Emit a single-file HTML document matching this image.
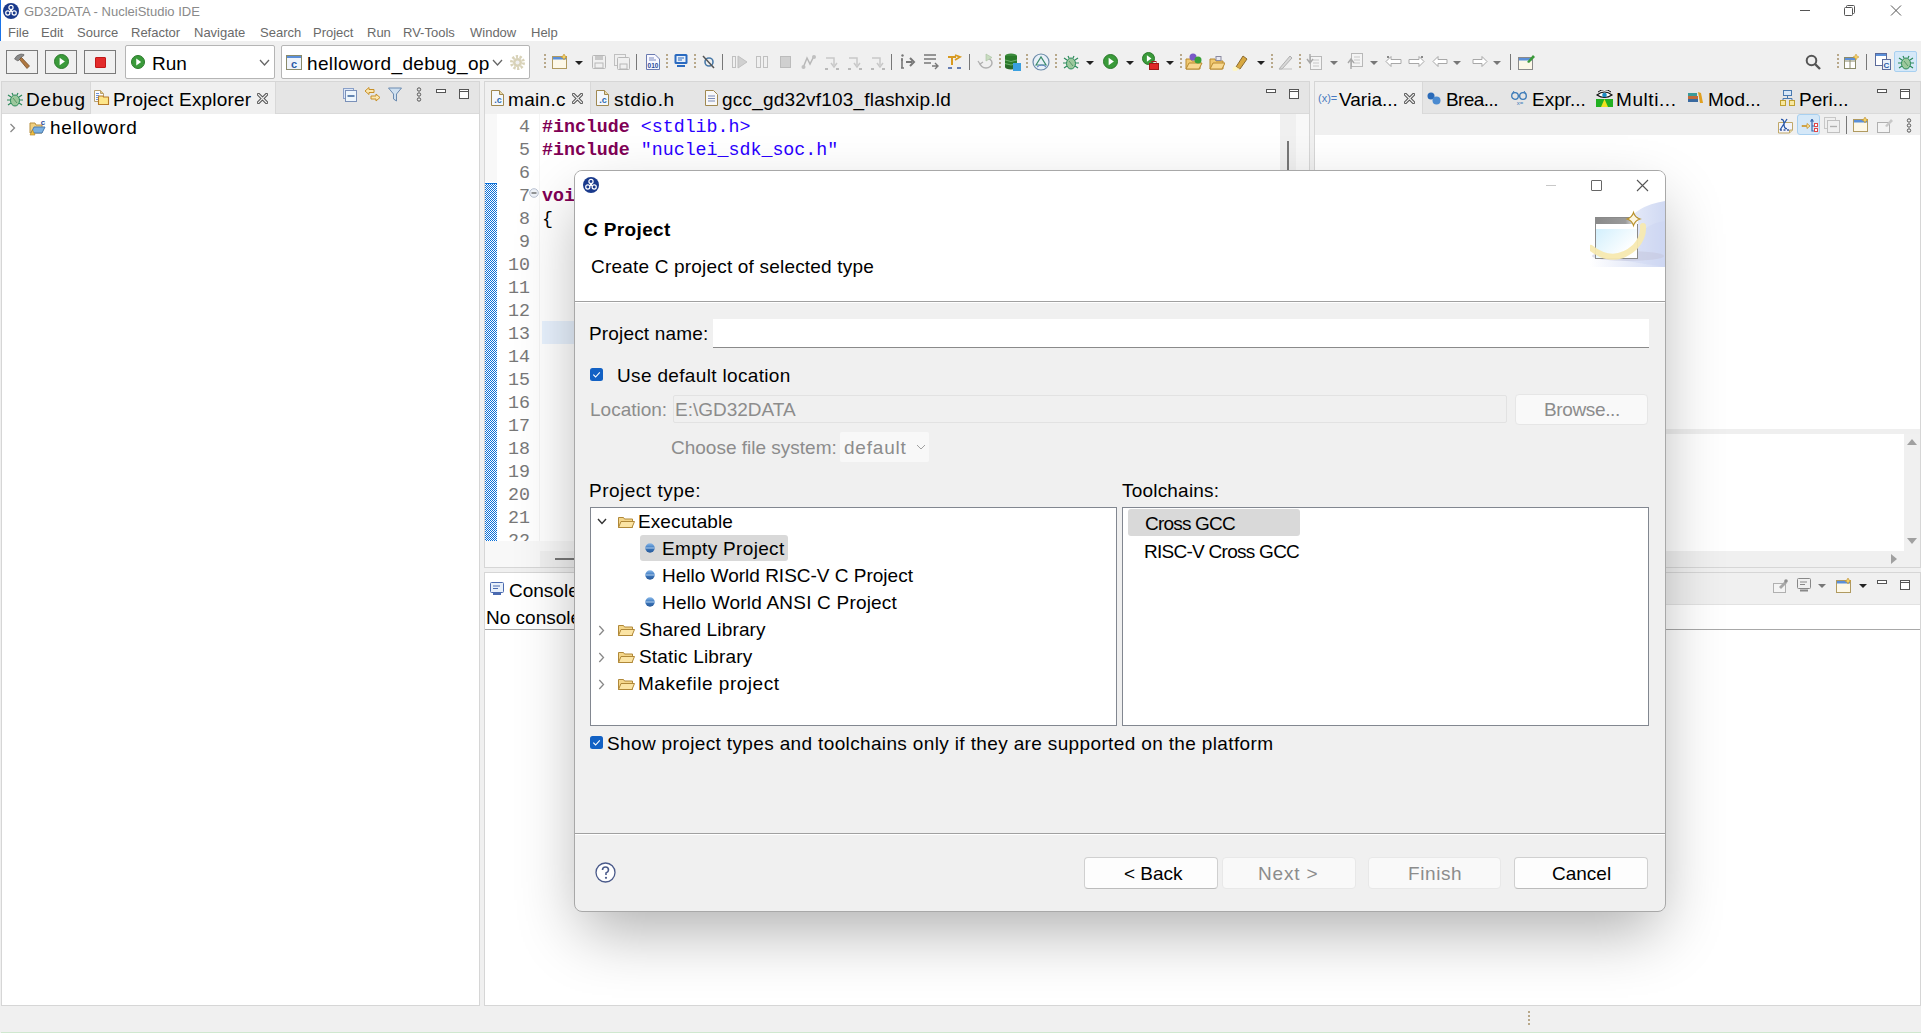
<!DOCTYPE html>
<html><head><meta charset="utf-8"><title>NucleiStudio IDE</title>
<style>
html,body{margin:0;padding:0;}
body{width:1921px;height:1033px;position:relative;overflow:hidden;background:#f0f0f0;font-family:'Liberation Sans',sans-serif;}
body>div,body>svg{position:absolute;}
.t{white-space:pre;line-height:0;}
.kw{color:#7f0055;font-weight:700;}
.st{color:#2a00ff;}
</style></head><body>
<div style="left:0px;top:0px;width:1921px;height:41px;background:#fff"></div>
<div style="left:0px;top:0px;width:1px;height:41px;background:#1a73e8"></div>
<svg style="left:3px;top:3px;" width="16" height="16" viewBox="0 0 16 16"><circle cx="8.0" cy="8.0" r="8.0" fill="#1a3a8c"/><g fill="none" stroke="#fff" stroke-width="1.2"><circle cx="8.0" cy="4.4" r="2.08"/><circle cx="4.8" cy="10.0" r="2.08"/><circle cx="11.2" cy="10.0" r="2.08"/></g><circle cx="8.0" cy="8.0" r="1.2" fill="#fff"/></svg>
<div class="t" style="left:24px;top:12px;font-size:13px;color:#8a8a8a;font-weight:400;font-family:'Liberation Sans';">GD32DATA - NucleiStudio IDE</div>
<div style="left:1800px;top:10px;width:10px;height:1px;background:#555"></div>
<svg style="left:1844px;top:5px;" width="12" height="11" viewBox="0 0 12 11"><rect x="0.5" y="2.5" width="8" height="8" rx="1" fill="none" stroke="#555"/><path d="M2.5 2.5V1.5Q2.5 0.5 3.5 0.5H9.5Q10.5 0.5 10.5 1.5V7.5Q10.5 8.5 9.5 8.5H8.5" fill="none" stroke="#555"/></svg>
<svg style="left:1890px;top:5px;" width="12" height="11" viewBox="0 0 12 11"><path d="M1 0.5L11 10.5M11 0.5L1 10.5" stroke="#555" stroke-width="1"/></svg>
<div class="t" style="left:8px;top:33px;font-size:13px;color:#6a6a6a;font-weight:400;font-family:'Liberation Sans';">File</div>
<div class="t" style="left:41px;top:33px;font-size:13px;color:#6a6a6a;font-weight:400;font-family:'Liberation Sans';">Edit</div>
<div class="t" style="left:77px;top:33px;font-size:13px;color:#6a6a6a;font-weight:400;font-family:'Liberation Sans';">Source</div>
<div class="t" style="left:131px;top:33px;font-size:13px;color:#6a6a6a;font-weight:400;font-family:'Liberation Sans';">Refactor</div>
<div class="t" style="left:194px;top:33px;font-size:13px;color:#6a6a6a;font-weight:400;font-family:'Liberation Sans';">Navigate</div>
<div class="t" style="left:260px;top:33px;font-size:13px;color:#6a6a6a;font-weight:400;font-family:'Liberation Sans';">Search</div>
<div class="t" style="left:313px;top:33px;font-size:13px;color:#6a6a6a;font-weight:400;font-family:'Liberation Sans';">Project</div>
<div class="t" style="left:367px;top:33px;font-size:13px;color:#6a6a6a;font-weight:400;font-family:'Liberation Sans';">Run</div>
<div class="t" style="left:403px;top:33px;font-size:13px;color:#6a6a6a;font-weight:400;font-family:'Liberation Sans';">RV-Tools</div>
<div class="t" style="left:470px;top:33px;font-size:13px;color:#6a6a6a;font-weight:400;font-family:'Liberation Sans';">Window</div>
<div class="t" style="left:531px;top:33px;font-size:13px;color:#6a6a6a;font-weight:400;font-family:'Liberation Sans';">Help</div>
<div style="left:6px;top:50px;width:32px;height:24px;border:1px solid #7a7a7a;box-sizing:border-box"></div>
<div style="left:45px;top:50px;width:32px;height:24px;border:1px solid #7a7a7a;box-sizing:border-box"></div>
<div style="left:84px;top:50px;width:32px;height:24px;border:1px solid #7a7a7a;box-sizing:border-box"></div>
<svg style="left:13px;top:53px;" width="18" height="18" viewBox="0 0 18 18"><path d="M1.5 6 Q3 2 8 1 L11 1.5 L10.5 3 Q8 3.5 7.5 5.5 L5 8 Q3 7 1.5 6 Z" fill="#8a8a8a" stroke="#555" stroke-width="0.6"/><path d="M6.5 6.5 L8.5 4.5 L16.5 13 L14 15.5 Z" fill="#b07840" stroke="#6a4420" stroke-width="0.7"/></svg>
<svg style="left:54px;top:54px;" width="15" height="15" viewBox="0 0 15 15"><circle cx="7.5" cy="7.5" r="7.0" fill="#3a9a3a" stroke="#2a7a2a" stroke-width="1"/><path d="M5.625 3.75 L10.875 7.5 L5.625 11.25 Z" fill="#fff"/></svg>
<div style="left:95px;top:57px;width:11px;height:11px;background:#e32b2b;border-radius:1px;border:1px solid #c01818;box-sizing:border-box"></div>
<div style="left:125px;top:45px;width:150px;height:34px;background:#fff;border:1px solid #b5b5b5;border-radius:2px;box-sizing:border-box"></div>
<svg style="left:131px;top:55px;" width="14" height="14" viewBox="0 0 14 14"><circle cx="7.0" cy="7.0" r="6.5" fill="#3a9a3a" stroke="#2a7a2a" stroke-width="1"/><path d="M5.25 3.5 L10.15 7.0 L5.25 10.5 Z" fill="#fff"/></svg>
<div class="t" style="left:152px;top:64px;font-size:19px;color:#000;font-weight:400;font-family:'Liberation Sans';">Run</div>
<svg style="left:259px;top:59px;" width="11" height="7" viewBox="0 0 11 7"><path d="M1 1 L5.5 6 L10 1" fill="none" stroke="#666" stroke-width="1.3"/></svg>
<div style="left:281px;top:45px;width:249px;height:34px;background:#fff;border:1px solid #b5b5b5;border-radius:2px;box-sizing:border-box"></div>
<svg style="left:286px;top:55px;" width="16" height="15" viewBox="0 0 16 15"><rect x="0.5" y="0.5" width="15" height="14" fill="#eef3fb" stroke="#8a8a6a"/><rect x="1" y="1" width="14" height="2" fill="#5b8fd8"/><text x="8" y="12.5" font-size="11" font-family="Liberation Sans" font-weight="700" fill="#2a5aa8" text-anchor="middle">c</text></svg>
<div class="t" style="left:307px;top:64px;font-size:19px;color:#000;font-weight:400;font-family:'Liberation Sans';letter-spacing:0.35px;">helloword_debug_op</div>
<svg style="left:492px;top:59px;" width="11" height="7" viewBox="0 0 11 7"><path d="M1 1 L5.5 6 L10 1" fill="none" stroke="#666" stroke-width="1.3"/></svg>
<svg style="left:509px;top:54px;" width="17" height="17" viewBox="0 0 17 17"><circle cx="8.5" cy="8.5" r="6" fill="none" stroke="#d8d2b8" stroke-width="3" stroke-dasharray="2.2 1.5"/><circle cx="8.5" cy="8.5" r="4.5" fill="#d8d2b8"/><circle cx="8.5" cy="8.5" r="2" fill="#f0f0f0"/></svg>
<div style="left:544px;top:54px;width:2px;height:16px;background:repeating-linear-gradient(#b8a88a 0 2px, transparent 2px 4px)"></div>
<svg style="left:552px;top:54px;" width="16" height="16" viewBox="0 0 16 16"><rect x="0.5" y="2.5" width="14" height="12" fill="#fdf8e8" stroke="#b09a60"/><rect x="1" y="3" width="13" height="2.5" fill="#5b8fd8"/><path d="M12 0 L13 2 L15 3 L13 4 L12 6 L11 4 L9 3 L11 2 Z" fill="#f5d060" stroke="#c09030" stroke-width="0.6"/></svg>
<svg style="left:575px;top:61px;" width="8" height="4" viewBox="0 0 8 4"><path d="M0 0 L8 0 L4 4 Z" fill="#222"/></svg>
<svg style="left:591px;top:54px;" width="16" height="16" viewBox="0 0 16 16"><rect x="1.5" y="1.5" width="13" height="13" rx="1" fill="none" stroke="#b8b8b8"/><rect x="4" y="2" width="8" height="4" fill="#c8c8c8"/><rect x="4" y="9" width="8" height="5" fill="none" stroke="#b8b8b8"/></svg>
<svg style="left:614px;top:54px;" width="16" height="16" viewBox="0 0 16 16"><rect x="0.5" y="0.5" width="11" height="11" fill="none" stroke="#c0c0c0"/><rect x="3.5" y="3.5" width="12" height="12" rx="1" fill="#f0f0f0" stroke="#b8b8b8"/><rect x="6" y="10" width="7" height="5" fill="none" stroke="#b8b8b8"/></svg>
<div style="left:636px;top:54px;width:1px;height:16px;background:#777"></div>
<svg style="left:645px;top:53px;" width="16" height="18" viewBox="0 0 16 18"><path d="M1.5 1.5 H10 L14.5 6 V16.5 H1.5 Z" fill="#f8f8ff" stroke="#6a7ab0"/><path d="M4 5 H9 M4 7 H11" stroke="#7a8ac0"/><text x="8" y="15" font-size="6.5" font-family="Liberation Sans" font-weight="700" fill="#2a4a98" text-anchor="middle">010</text></svg>
<div style="left:666px;top:54px;width:2px;height:16px;background:repeating-linear-gradient(#b8a88a 0 2px, transparent 2px 4px)"></div>
<svg style="left:674px;top:53px;" width="14" height="16" viewBox="0 0 14 16"><rect x="0.5" y="1" width="13" height="10" rx="1.5" fill="#2a6ac0"/><rect x="2.5" y="3" width="9" height="6" fill="#e8f0fa"/><path d="M4 5 H10 M4 7 H8" stroke="#2a6ac0"/><rect x="3" y="12" width="8" height="2" fill="#2a6ac0"/></svg>
<div style="left:694px;top:54px;width:2px;height:16px;background:repeating-linear-gradient(#b8a88a 0 2px, transparent 2px 4px)"></div>
<svg style="left:702px;top:54px;" width="13" height="16" viewBox="0 0 13 16"><circle cx="7" cy="8" r="4" fill="none" stroke="#4a7aa8" stroke-width="1.6"/><path d="M1 2 L12 14" stroke="#555" stroke-width="1.5"/></svg>
<div style="left:722px;top:54px;width:1px;height:16px;background:#777"></div>
<svg style="left:731px;top:55px;" width="17" height="14" viewBox="0 0 17 14"><rect x="1.5" y="1.5" width="3" height="11" fill="none" stroke="#c0c0c0"/><path d="M7 1 L16 7 L7 13 Z" fill="#d0d0d0" stroke="#c0c0c0"/></svg>
<svg style="left:756px;top:55px;" width="12" height="14" viewBox="0 0 12 14"><rect x="0.5" y="1.5" width="4" height="11" fill="none" stroke="#c0c0c0"/><rect x="7.5" y="1.5" width="4" height="11" fill="none" stroke="#c0c0c0"/></svg>
<svg style="left:779px;top:55px;" width="13" height="14" viewBox="0 0 13 14"><rect x="1.5" y="1.5" width="10" height="11" fill="#d0d0d0" stroke="#bcbcbc"/></svg>
<svg style="left:801px;top:54px;" width="15" height="16" viewBox="0 0 15 16"><path d="M2 14 L6 4 L9 10 L13 2" fill="none" stroke="#b8b8b8" stroke-width="1.5"/><circle cx="2.5" cy="13" r="2" fill="#c0c0c0"/><circle cx="13" cy="3" r="2" fill="#c0c0c0"/></svg>
<svg style="left:824px;top:54px;" width="16" height="16" viewBox="0 0 16 16"><path d="M2 4 H10 V11" fill="none" stroke="#c8c8c8" stroke-width="1.5"/><path d="M7 9 L10 13 L13 9" fill="none" stroke="#c8c8c8" stroke-width="1.5"/><path d="M1 15 H4 M12 15 H15" stroke="#a8a8a8" stroke-width="1.5"/></svg>
<svg style="left:847px;top:54px;" width="16" height="16" viewBox="0 0 16 16"><path d="M2 4 H10 V11" fill="none" stroke="#c8c8c8" stroke-width="1.5"/><path d="M7 9 L10 13 L13 9" fill="none" stroke="#c8c8c8" stroke-width="1.5"/><path d="M1 15 H4 M12 15 H15" stroke="#a8a8a8" stroke-width="1.5"/></svg>
<svg style="left:870px;top:54px;" width="16" height="16" viewBox="0 0 16 16"><path d="M2 4 H10 V11" fill="none" stroke="#c8c8c8" stroke-width="1.5"/><path d="M7 9 L10 13 L13 9" fill="none" stroke="#c8c8c8" stroke-width="1.5"/><path d="M1 15 H4 M12 15 H15" stroke="#a8a8a8" stroke-width="1.5"/></svg>
<div style="left:891px;top:54px;width:1px;height:16px;background:#777"></div>
<svg style="left:900px;top:54px;" width="16" height="16" viewBox="0 0 16 16"><path d="M2 4 V14 M1 14 H4 M1 6 H3" stroke="#777" stroke-width="1.6"/><circle cx="2.5" cy="1.5" r="1.2" fill="#777"/><path d="M6 8 H12 M10 4 L14 8 L10 12" fill="none" stroke="#777" stroke-width="2"/></svg>
<svg style="left:923px;top:53px;" width="16" height="17" viewBox="0 0 16 17"><path d="M1 2 H13 M1 6 H13 M1 10 H8" stroke="#777" stroke-width="1.6"/><path d="M9 13 H14 M12 10 L15 13 L12 16" fill="none" stroke="#777" stroke-width="1.4"/></svg>
<svg style="left:946px;top:53px;" width="17" height="17" viewBox="0 0 17 17"><path d="M2 4 H10 M6 4 V12" stroke="#d89a20" stroke-width="2"/><path d="M9 2 L14 4 L9 7" fill="none" stroke="#d89a20" stroke-width="1.8"/><path d="M2 15 H6 M11 15 H15" stroke="#3a5aa0" stroke-width="1.6"/></svg>
<div style="left:969px;top:54px;width:1px;height:16px;background:#777"></div>
<svg style="left:977px;top:53px;" width="17" height="17" viewBox="0 0 17 17"><path d="M3 10 A6 5 0 1 0 9 5" fill="none" stroke="#b0b0b0" stroke-width="1.5"/><path d="M1 8 L3 11 L6 9" fill="none" stroke="#b0b0b0" stroke-width="1.3"/><path d="M9 1 L15 4.5 L9 8 Z" fill="#c8dcc0" stroke="#a8c0a0" stroke-width="0.6"/></svg>
<div style="left:999px;top:54px;width:2px;height:16px;background:repeating-linear-gradient(#b8a88a 0 2px, transparent 2px 4px)"></div>
<svg style="left:1004px;top:53px;" width="17" height="18" viewBox="0 0 17 18"><ellipse cx="7" cy="3" rx="6" ry="2.5" fill="#3a8a3a"/><rect x="1" y="3" width="12" height="11" fill="#2a7a2a"/><ellipse cx="7" cy="14" rx="6" ry="2.5" fill="#2a6a2a"/><path d="M1 7 Q7 10 13 7 M1 10.5 Q7 13.5 13 10.5" fill="none" stroke="#6ab06a"/><rect x="9" y="10" width="8" height="8" fill="#3aa0e0"/></svg>
<div style="left:1026px;top:54px;width:2px;height:16px;background:repeating-linear-gradient(#b8a88a 0 2px, transparent 2px 4px)"></div>
<svg style="left:1032px;top:53px;" width="18" height="18" viewBox="0 0 18 18"><circle cx="9" cy="9" r="8" fill="#e8f0f8" stroke="#6a8aa8" stroke-width="1.2"/><path d="M4 12 L9 4 L14 12 Z" fill="none" stroke="#3a8a6a" stroke-width="1.2"/><path d="M5 14 Q10 10 14 14" fill="none" stroke="#5a7ac8" stroke-width="1"/></svg>
<div style="left:1055px;top:54px;width:2px;height:16px;background:repeating-linear-gradient(#b8a88a 0 2px, transparent 2px 4px)"></div>
<svg style="left:1063px;top:54px;" width="16" height="16" viewBox="0 0 16 16"><g stroke="#2a8a5a" stroke-width="1.2" fill="none"><path d="M1 4 L4 6 M15 4 L12 6 M0 9 H4 M16 9 H12 M1 14 L4 12 M15 14 L12 12 M5 2 L6 4 M11 2 L10 4"/></g><ellipse cx="8" cy="9.5" rx="4.5" ry="5.5" fill="#9cc89c" stroke="#2a8a5a"/><path d="M6 7 L10 12" stroke="#5a9a6a"/></svg>
<svg style="left:1086px;top:61px;" width="8" height="4" viewBox="0 0 8 4"><path d="M0 0 L8 0 L4 4 Z" fill="#222"/></svg>
<svg style="left:1103px;top:54px;" width="15" height="15" viewBox="0 0 15 15"><circle cx="7.5" cy="7.5" r="7.0" fill="#3a9a3a" stroke="#2a7a2a" stroke-width="1"/><path d="M5.625 3.75 L10.875 7.5 L5.625 11.25 Z" fill="#fff"/></svg>
<svg style="left:1126px;top:61px;" width="8" height="4" viewBox="0 0 8 4"><path d="M0 0 L8 0 L4 4 Z" fill="#222"/></svg>
<svg style="left:1142px;top:52px;" width="13" height="13" viewBox="0 0 13 13"><circle cx="6.5" cy="6.5" r="6.0" fill="#3a9a3a" stroke="#2a7a2a" stroke-width="1"/><path d="M4.875 3.25 L9.424999999999999 6.5 L4.875 9.75 Z" fill="#fff"/></svg>
<svg style="left:1149px;top:61px;" width="10" height="9" viewBox="0 0 10 9"><rect x="0.5" y="2.5" width="9" height="6" fill="#e02828" stroke="#a01818"/><rect x="3" y="0.5" width="4" height="2" fill="none" stroke="#a01818"/></svg>
<svg style="left:1166px;top:61px;" width="8" height="4" viewBox="0 0 8 4"><path d="M0 0 L8 0 L4 4 Z" fill="#222"/></svg>
<div style="left:1180px;top:54px;width:2px;height:16px;background:repeating-linear-gradient(#b8a88a 0 2px, transparent 2px 4px)"></div>
<svg style="left:1185px;top:53px;" width="18" height="17" viewBox="0 0 18 17"><path d="M1 6 H6 L7 8 H15 V16 H1 Z" fill="#f0c870" stroke="#b88a30"/><path d="M1 16 L4 10 H17 L14 16 Z" fill="#f8d890" stroke="#b88a30"/><circle cx="8" cy="4" r="3.5" fill="#7a5ac8"/><circle cx="13" cy="7" r="3.5" fill="#3aa03a"/></svg>
<svg style="left:1209px;top:56px;" width="16" height="14" viewBox="0 0 16 14"><path d="M1 3 H6 L7 5 H14 V13 H1 Z" fill="#f0c870" stroke="#b88a30"/><path d="M1 13 L4 7 H16 L13 13 Z" fill="#f8d890" stroke="#b88a30"/><rect x="7" y="0.5" width="5" height="4" fill="#e8e8f0" stroke="#8a8aa0"/></svg>
<svg style="left:1232px;top:53px;" width="18" height="18" viewBox="0 0 18 18"><path d="M4 14 L11 3 L15 6 L8 16 Z" fill="#d8a840" stroke="#8a6a30"/><path d="M2 17 L4 14 L8 16 Z" fill="#f8e8b0"/><circle cx="3" cy="16" r="2.5" fill="#fff8c0" opacity="0.8"/></svg>
<svg style="left:1257px;top:61px;" width="8" height="4" viewBox="0 0 8 4"><path d="M0 0 L8 0 L4 4 Z" fill="#222"/></svg>
<div style="left:1271px;top:54px;width:2px;height:16px;background:repeating-linear-gradient(#b8a88a 0 2px, transparent 2px 4px)"></div>
<svg style="left:1277px;top:53px;" width="17" height="17" viewBox="0 0 17 17"><path d="M2 16 L13 3 L15 5 L5 16 Z" fill="#d8d8d8" stroke="#b0b0b0"/><path d="M2 16 H15" stroke="#c0c0c0"/></svg>
<div style="left:1299px;top:54px;width:2px;height:16px;background:repeating-linear-gradient(#b8a88a 0 2px, transparent 2px 4px)"></div>
<svg style="left:1306px;top:53px;" width="16" height="17" viewBox="0 0 16 17"><rect x="4.5" y="3.5" width="11" height="13" fill="#f4f4f4" stroke="#b8b8b8"/><path d="M7 7 H13 M7 10 H13 M7 13 H13" stroke="#c8c8c8"/><path d="M4 1 V9 M1 6 L4 10 L7 6" fill="none" stroke="#a8a8a8" stroke-width="1.4"/></svg>
<svg style="left:1330px;top:61px;" width="8" height="4" viewBox="0 0 8 4"><path d="M0 0 L8 0 L4 4 Z" fill="#777"/></svg>
<svg style="left:1347px;top:53px;" width="16" height="17" viewBox="0 0 16 17"><rect x="4.5" y="0.5" width="11" height="13" fill="#f4f4f4" stroke="#b8b8b8"/><path d="M7 4 H13 M7 7 H13 M7 10 H13" stroke="#c8c8c8"/><path d="M4 16 V7 M1 10 L4 6 L7 10" fill="none" stroke="#a8a8a8" stroke-width="1.4"/></svg>
<svg style="left:1370px;top:61px;" width="8" height="4" viewBox="0 0 8 4"><path d="M0 0 L8 0 L4 4 Z" fill="#777"/></svg>
<svg style="left:1385px;top:55px;" width="17" height="13" viewBox="0 0 17 13"><path d="M1 6.5 L6 1.5 V4.5 H16 V8.5 H6 V11.5 Z" fill="#fff" stroke="#a8a8a8"/><path d="M2 1 L4 3 M4 1 L2 3" stroke="#888"/></svg>
<svg style="left:1408px;top:55px;" width="17" height="13" viewBox="0 0 17 13"><path d="M16 6.5 L11 1.5 V4.5 H1 V8.5 H11 V11.5 Z" fill="#fff" stroke="#a8a8a8"/><path d="M13 1 L15 3 M15 1 L13 3" stroke="#888"/></svg>
<svg style="left:1432px;top:55px;" width="16" height="13" viewBox="0 0 16 13"><path d="M1 6.5 L6 1.5 V4.5 H15 V8.5 H6 V11.5 Z" fill="#fff" stroke="#a8a8a8"/></svg>
<svg style="left:1453px;top:61px;" width="8" height="4" viewBox="0 0 8 4"><path d="M0 0 L8 0 L4 4 Z" fill="#777"/></svg>
<svg style="left:1472px;top:55px;" width="16" height="13" viewBox="0 0 16 13"><path d="M15 6.5 L10 1.5 V4.5 H1 V8.5 H10 V11.5 Z" fill="#fff" stroke="#a8a8a8"/></svg>
<svg style="left:1493px;top:61px;" width="8" height="4" viewBox="0 0 8 4"><path d="M0 0 L8 0 L4 4 Z" fill="#777"/></svg>
<div style="left:1510px;top:54px;width:1px;height:16px;background:#777"></div>
<svg style="left:1518px;top:53px;" width="17" height="18" viewBox="0 0 17 18"><rect x="0.5" y="4.5" width="14" height="12" fill="#fdf8e8" stroke="#8a8a8a"/><rect x="1" y="5" width="13" height="2.5" fill="#5b8fd8"/><path d="M9 9 L15 2 L17 4 L11 10 Z" fill="#3a9a3a"/></svg>
<svg style="left:1805px;top:54px;" width="16" height="16" viewBox="0 0 16 16"><circle cx="6.5" cy="6.5" r="4.8" fill="none" stroke="#555" stroke-width="2"/><path d="M10 10 L15 15" stroke="#555" stroke-width="2.4"/></svg>
<div style="left:1837px;top:54px;width:2px;height:16px;background:repeating-linear-gradient(#b8a88a 0 2px, transparent 2px 4px)"></div>
<svg style="left:1844px;top:54px;" width="15" height="15" viewBox="0 0 15 15"><rect x="0.5" y="3.5" width="11" height="11" fill="#fff" stroke="#8a8a6a"/><path d="M1 7 H11 M6 4 V14" stroke="#8a8a6a"/><rect x="1" y="4" width="10" height="2" fill="#5b8fd8"/><path d="M12 0 L13 2 L15 3 L13 4 L12 6 L11 4 L9 3 L11 2 Z" fill="#f5d060" stroke="#c09030" stroke-width="0.5"/></svg>
<div style="left:1866px;top:54px;width:1px;height:16px;background:#777"></div>
<svg style="left:1875px;top:53px;" width="16" height="17" viewBox="0 0 16 17"><rect x="0.5" y="0.5" width="11" height="12" fill="#fff" stroke="#5a6a9a"/><rect x="1" y="1" width="10" height="2" fill="#5b8fd8"/><rect x="7.5" y="6.5" width="8" height="10" fill="#e8f0fa" stroke="#5a6a9a"/><text x="11.5" y="15" font-size="8" font-family="Liberation Sans" font-weight="700" fill="#2a5aa8" text-anchor="middle">C</text></svg>
<div style="left:1894px;top:51px;width:23px;height:21px;background:#d5e8f8;border:1px solid #a8d0f0;border-radius:2px;box-sizing:border-box"></div>
<svg style="left:1898px;top:54px;" width="16" height="16" viewBox="0 0 16 16"><g stroke="#2a8a5a" stroke-width="1.2" fill="none"><path d="M1 4 L4 6 M15 4 L12 6 M0 9 H4 M16 9 H12 M1 14 L4 12 M15 14 L12 12 M5 2 L6 4 M11 2 L10 4"/></g><ellipse cx="8" cy="9.5" rx="4.5" ry="5.5" fill="#9cc89c" stroke="#2a8a5a"/><path d="M6 7 L10 12" stroke="#5a9a6a"/></svg>
<div style="left:1px;top:81px;width:479px;height:925px;background:#fff;border:1px solid #d6d6d6;box-sizing:border-box"></div>
<div style="left:2px;top:82px;width:477px;height:32px;background:#e5e5e5;border-bottom:1px solid #dadada;box-sizing:border-box"></div>
<div style="left:90px;top:82px;width:186px;height:32px;background:#f0f0f0;border-right:1px solid #d8d8d8;border-left:1px solid #d8d8d8;box-sizing:border-box"></div>
<svg style="left:7px;top:91px;" width="16" height="16" viewBox="0 0 16 16"><g stroke="#2a8a5a" stroke-width="1.2" fill="none"><path d="M1 4 L4 6 M15 4 L12 6 M0 9 H4 M16 9 H12 M1 14 L4 12 M15 14 L12 12 M5 2 L6 4 M11 2 L10 4"/></g><ellipse cx="8" cy="9.5" rx="4.5" ry="5.5" fill="#9cc89c" stroke="#2a8a5a"/><path d="M6 7 L10 12" stroke="#5a9a6a"/></svg>
<div class="t" style="left:26px;top:100px;font-size:19px;color:#000;font-weight:400;font-family:'Liberation Sans';letter-spacing:0.8px;">Debug</div>
<svg style="left:94px;top:90px;" width="16" height="16" viewBox="0 0 16 16"><path d="M0.5 0.5 H6.5 L9.5 3.5 V11.5 H0.5 Z" fill="#fbfcff" stroke="#b8a070"/><path d="M6.5 0.5 V3.5 H9.5" fill="#e0c880" stroke="#b8a070"/><path d="M2 3.5 H5 M2 5.5 H5 M2 7.5 H4.5 M2 9.5 H4.5" stroke="#6a92d8" stroke-width="1"/><path d="M5 6 H9 L9.5 7 H14.5 V14.5 H4.5 V7 Z" fill="#fde68a" stroke="#b87a28" stroke-width="1.1" stroke-linejoin="round"/></svg>
<div class="t" style="left:113px;top:100px;font-size:19px;color:#000;font-weight:400;font-family:'Liberation Sans';letter-spacing:0.2px;">Project Explorer</div>
<svg style="left:257px;top:93px;" width="11" height="11" viewBox="0 0 11 11"><path d="M1.5 1.5 L9.5 9.5 M9.5 1.5 L1.5 9.5" stroke="#555" stroke-width="3.2" stroke-linecap="square"/><path d="M1.5 1.5 L9.5 9.5 M9.5 1.5 L1.5 9.5" stroke="#f0f0f0" stroke-width="1.2" stroke-linecap="square"/></svg>
<svg style="left:343px;top:88px;" width="14" height="14" viewBox="0 0 14 14"><rect x="0.5" y="0.5" width="10" height="10" fill="#dde8f8" stroke="#8aa0c8"/><rect x="2.5" y="2.5" width="11" height="11" fill="#eef6fc" stroke="#7a90b8"/><path d="M4.5 8 H11.5" stroke="#1a4a8a" stroke-width="1.3"/></svg>
<svg style="left:364px;top:86px;" width="17" height="17" viewBox="0 0 17 17"><path d="M1 5 L5 1.5 V3.5 H10 V6.5 H5 V8.5 Z" fill="#fbe7b0" stroke="#c89028" stroke-width="1"/><path d="M16 11.5 L12 8 V10 H7 V13 H12 V15 Z" fill="#fbe7b0" stroke="#c89028" stroke-width="1"/></svg>
<svg style="left:388px;top:87px;" width="14" height="15" viewBox="0 0 14 15"><path d="M0.5 1 H13.5 L8.5 7 V14 L5.5 12 V7 Z" fill="#cfe0f0" stroke="#6a8ab0"/></svg>
<svg style="left:416px;top:87px;" width="6" height="15" viewBox="0 0 6 15"><circle cx="3" cy="2.5" r="1.7" fill="none" stroke="#555"/><circle cx="3" cy="7.5" r="1.7" fill="none" stroke="#555"/><circle cx="3" cy="12.5" r="1.7" fill="none" stroke="#555"/></svg>
<div style="left:436px;top:89px;width:10px;height:4px;border:1px solid #555;box-sizing:border-box;background:#fff"></div>
<div style="left:459px;top:89px;width:10px;height:10px;border:1px solid #555;box-sizing:border-box;background:#fff"></div>
<div style="left:460px;top:91px;width:8px;height:1px;background:#555"></div>
<svg style="left:9px;top:123px;" width="7" height="10" viewBox="0 0 7 10"><path d="M1.5 1 L5.5 5 L1.5 9" fill="none" stroke="#888" stroke-width="1.3"/></svg>
<svg style="left:29px;top:119px;" width="17" height="17" viewBox="0 0 17 17"><path d="M1 4 H6 L7 6 H13 V14 H1 Z" fill="#f0d080" stroke="#b89040"/><path d="M2 14 L5 8 H16 L13 14 Z" fill="#7ab0e0" stroke="#4a7ab0"/><text x="14" y="6" font-size="8" font-family="Liberation Sans" font-weight="700" fill="#2a4a98" text-anchor="middle">c</text><path d="M1 16 L3.5 11 L6 16 Z" fill="#f0c040" stroke="#b08020" stroke-width="0.6"/></svg>
<div class="t" style="left:50px;top:128px;font-size:19px;color:#000;font-weight:400;font-family:'Liberation Sans';letter-spacing:0.7px;">helloword</div>
<div style="left:484px;top:81px;width:826px;height:487px;background:#fff;border:1px solid #d6d6d6;box-sizing:border-box"></div>
<div style="left:485px;top:82px;width:824px;height:32px;background:#e5e5e5;border-bottom:1px solid #dadada;box-sizing:border-box"></div>
<div style="left:485px;top:82px;width:106px;height:32px;background:#f0f0f0;border-right:1px solid #d8d8d8;box-sizing:border-box"></div>
<svg style="left:491px;top:90px;" width="13" height="16" viewBox="0 0 13 16"><path d="M0.5 0.5 H8.5 L12.5 4.5 V15.5 H0.5 Z" fill="#f4f8fc" stroke="#a08850"/><path d="M8.5 0.5 V4.5 H12.5" fill="#e8d8a8" stroke="#a08850"/><text x="7" y="13" font-size="9" font-family="Liberation Sans" font-weight="700" fill="#2a68b0" text-anchor="middle">.c</text></svg>
<div class="t" style="left:508px;top:100px;font-size:19px;color:#000;font-weight:400;font-family:'Liberation Sans';letter-spacing:0.3px;">main.c</div>
<svg style="left:572px;top:93px;" width="11" height="11" viewBox="0 0 11 11"><path d="M1.5 1.5 L9.5 9.5 M9.5 1.5 L1.5 9.5" stroke="#555" stroke-width="3.2" stroke-linecap="square"/><path d="M1.5 1.5 L9.5 9.5 M9.5 1.5 L1.5 9.5" stroke="#f0f0f0" stroke-width="1.2" stroke-linecap="square"/></svg>
<svg style="left:596px;top:90px;" width="13" height="16" viewBox="0 0 13 16"><path d="M0.5 0.5 H8.5 L12.5 4.5 V15.5 H0.5 Z" fill="#f4f8fc" stroke="#a08850"/><path d="M8.5 0.5 V4.5 H12.5" fill="#e8d8a8" stroke="#a08850"/><text x="7" y="13" font-size="9" font-family="Liberation Sans" font-weight="700" fill="#2a68b0" text-anchor="middle">.c</text></svg>
<div class="t" style="left:614px;top:100px;font-size:19px;color:#000;font-weight:400;font-family:'Liberation Sans';letter-spacing:0.7px;">stdio.h</div>
<svg style="left:705px;top:90px;" width="13" height="16" viewBox="0 0 13 16"><path d="M0.5 0.5 H8.5 L12.5 4.5 V15.5 H0.5 Z" fill="#f8f8f8" stroke="#a08850"/><path d="M3 6 H10 M3 8.5 H10 M3 11 H10" stroke="#7a8ab8"/></svg>
<div class="t" style="left:722px;top:100px;font-size:19px;color:#000;font-weight:400;font-family:'Liberation Sans';letter-spacing:0.2px;">gcc_gd32vf103_flashxip.ld</div>
<div style="left:1266px;top:89px;width:10px;height:4px;border:1px solid #555;box-sizing:border-box;background:#fff"></div>
<div style="left:1289px;top:89px;width:10px;height:10px;border:1px solid #555;box-sizing:border-box;background:#fff"></div>
<div style="left:1290px;top:91px;width:8px;height:1px;background:#555"></div>
<div style="left:485px;top:114px;width:12px;height:69px;background:#f8f8f8"></div>
<div style="left:485px;top:182px;width:12px;height:1px;background:#fff"></div>
<div style="left:485px;top:183px;width:12px;height:1px;background:#0a6fd8"></div>
<div style="left:485px;top:184px;width:12px;height:357px;background:repeating-conic-gradient(#0a6fd8 0 25%, #fff 0 50%) 0 0/2px 2px"></div>
<div style="left:539px;top:114px;width:1px;height:427px;background:#f4f4f4"></div>
<div style="left:542px;top:321px;width:740px;height:23px;background:#e8f2fe"></div>
<div class="t" style="left:519px;top:127px;font-size:18.3px;color:#787878;font-weight:400;font-family:'Liberation Mono';">4</div>
<div class="t" style="left:542px;top:127px;font-size:18.3px;color:#000;font-weight:400;font-family:'Liberation Mono';"><span class="kw">#include</span> <span class="st">&lt;stdlib.h&gt;</span></div>
<div class="t" style="left:519px;top:150px;font-size:18.3px;color:#787878;font-weight:400;font-family:'Liberation Mono';">5</div>
<div class="t" style="left:542px;top:150px;font-size:18.3px;color:#000;font-weight:400;font-family:'Liberation Mono';"><span class="kw">#include</span> <span class="st">"nuclei_sdk_soc.h"</span></div>
<div class="t" style="left:519px;top:173px;font-size:18.3px;color:#787878;font-weight:400;font-family:'Liberation Mono';">6</div>
<div class="t" style="left:519px;top:196px;font-size:18.3px;color:#787878;font-weight:400;font-family:'Liberation Mono';">7</div>
<div class="t" style="left:542px;top:196px;font-size:18.3px;color:#000;font-weight:400;font-family:'Liberation Mono';"><span class="kw">void</span></div>
<div class="t" style="left:519px;top:219px;font-size:18.3px;color:#787878;font-weight:400;font-family:'Liberation Mono';">8</div>
<div class="t" style="left:542px;top:219px;font-size:18.3px;color:#000;font-weight:400;font-family:'Liberation Mono';">{</div>
<div class="t" style="left:519px;top:242px;font-size:18.3px;color:#787878;font-weight:400;font-family:'Liberation Mono';">9</div>
<div class="t" style="left:508px;top:265px;font-size:18.3px;color:#787878;font-weight:400;font-family:'Liberation Mono';">10</div>
<div class="t" style="left:508px;top:288px;font-size:18.3px;color:#787878;font-weight:400;font-family:'Liberation Mono';">11</div>
<div class="t" style="left:508px;top:311px;font-size:18.3px;color:#787878;font-weight:400;font-family:'Liberation Mono';">12</div>
<div class="t" style="left:508px;top:334px;font-size:18.3px;color:#787878;font-weight:400;font-family:'Liberation Mono';">13</div>
<div class="t" style="left:508px;top:357px;font-size:18.3px;color:#787878;font-weight:400;font-family:'Liberation Mono';">14</div>
<div class="t" style="left:508px;top:380px;font-size:18.3px;color:#787878;font-weight:400;font-family:'Liberation Mono';">15</div>
<div class="t" style="left:508px;top:403px;font-size:18.3px;color:#787878;font-weight:400;font-family:'Liberation Mono';">16</div>
<div class="t" style="left:508px;top:426px;font-size:18.3px;color:#787878;font-weight:400;font-family:'Liberation Mono';">17</div>
<div class="t" style="left:508px;top:449px;font-size:18.3px;color:#787878;font-weight:400;font-family:'Liberation Mono';">18</div>
<div class="t" style="left:508px;top:472px;font-size:18.3px;color:#787878;font-weight:400;font-family:'Liberation Mono';">19</div>
<div class="t" style="left:508px;top:495px;font-size:18.3px;color:#787878;font-weight:400;font-family:'Liberation Mono';">20</div>
<div class="t" style="left:508px;top:518px;font-size:18.3px;color:#787878;font-weight:400;font-family:'Liberation Mono';">21</div>
<div class="t" style="left:508px;top:541px;font-size:18.3px;color:#787878;font-weight:400;font-family:'Liberation Mono';">22</div>
<svg style="left:529px;top:188px;" width="10" height="10" viewBox="0 0 10 10"><circle cx="5" cy="5" r="4.3" fill="#eef2f8" stroke="#b8c0d0"/><path d="M2.5 5 H7.5" stroke="#555" stroke-width="1.2"/></svg>
<div style="left:1280px;top:114px;width:29px;height:427px;background:linear-gradient(90deg,#f0f0f0 0 16px,#f8f8f8 16px)"></div>
<div style="left:1287px;top:141px;width:2px;height:400px;background:#777"></div>
<div style="left:485px;top:541px;width:824px;height:26px;background:#f8f8f8"></div>
<div style="left:540px;top:551px;width:769px;height:16px;background:#f0f0f0"></div>
<div style="left:555px;top:558px;width:140px;height:2px;background:#777"></div>
<div style="left:1314px;top:81px;width:607px;height:487px;background:#fff;border:1px solid #d6d6d6;box-sizing:border-box"></div>
<div style="left:1315px;top:82px;width:605px;height:32px;background:#e5e5e5;border-bottom:1px solid #dadada;box-sizing:border-box"></div>
<div style="left:1315px;top:82px;width:108px;height:32px;background:#f0f0f0;border-right:1px solid #d8d8d8;box-sizing:border-box"></div>
<div style="left:1315px;top:114px;width:605px;height:21px;background:#f0f0f0"></div>
<div class="t" style="left:1318px;top:98px;font-size:11px;color:#4a7ac0;font-weight:400;font-family:'Liberation Sans';">(x)=</div>
<div class="t" style="left:1339px;top:100px;font-size:19px;color:#000;font-weight:400;font-family:'Liberation Sans';">Varia...</div>
<svg style="left:1404px;top:93px;" width="11" height="11" viewBox="0 0 11 11"><path d="M1.5 1.5 L9.5 9.5 M9.5 1.5 L1.5 9.5" stroke="#555" stroke-width="3.2" stroke-linecap="square"/><path d="M1.5 1.5 L9.5 9.5 M9.5 1.5 L1.5 9.5" stroke="#f0f0f0" stroke-width="1.2" stroke-linecap="square"/></svg>
<svg style="left:1427px;top:91px;" width="14" height="14" viewBox="0 0 14 14"><circle cx="4" cy="5" r="3.5" fill="#2a6ab8"/><circle cx="9.5" cy="9.5" r="4" fill="#4a8ad0"/></svg>
<div class="t" style="left:1446px;top:100px;font-size:19px;color:#000;font-weight:400;font-family:'Liberation Sans';letter-spacing:-0.58px;">Brea...</div>
<svg style="left:1511px;top:90px;" width="18" height="16" viewBox="0 0 18 16"><circle cx="4" cy="6" r="3.3" fill="none" stroke="#3a7ab8" stroke-width="1.3"/><circle cx="12" cy="6" r="3.3" fill="none" stroke="#3a7ab8" stroke-width="1.3"/><path d="M7 6 H9 M1 4 L3 1 M15 4 L13 1" stroke="#3a7ab8"/><text x="9" y="15" font-size="6" fill="#3a7ab8" font-family="Liberation Sans" text-anchor="middle">x=</text></svg>
<div class="t" style="left:1532px;top:100px;font-size:19px;color:#000;font-weight:400;font-family:'Liberation Sans';">Expr...</div>
<svg style="left:1596px;top:90px;" width="17" height="17" viewBox="0 0 17 17"><rect x="0" y="9" width="17" height="8" fill="#22b022"/><path d="M8.5 9 L12 17 H5 Z" fill="#f0e020"/><path d="M1 5 Q8.5 -1 16 5 Q8.5 10 1 5 Z" fill="#fff" stroke="#111" stroke-width="1.2"/><circle cx="8.5" cy="5" r="2.3" fill="#1a8ac0"/><path d="M2 2 Q8.5 -3 15 2" fill="none" stroke="#111"/></svg>
<div class="t" style="left:1616px;top:100px;font-size:19px;color:#000;font-weight:400;font-family:'Liberation Sans';letter-spacing:0.57px;">Multi...</div>
<svg style="left:1688px;top:92px;" width="16" height="12" viewBox="0 0 16 12"><rect x="0" y="1" width="9" height="3" fill="#3a9a9a"/><rect x="0" y="4" width="10" height="3" fill="#c06a3a"/><rect x="0" y="7" width="10" height="3" fill="#3a6aa0"/><path d="M10 0 L13 1 L15 11 L12 11 Z" fill="#e0a020"/></svg>
<div class="t" style="left:1708px;top:100px;font-size:19px;color:#000;font-weight:400;font-family:'Liberation Sans';">Mod...</div>
<svg style="left:1780px;top:90px;" width="16" height="16" viewBox="0 0 16 16"><rect x="3.5" y="0.5" width="8" height="5" fill="#d8e8f8" stroke="#4a7ab0"/><path d="M7.5 5.5 V8.5 M3 8.5 H12 M3 8.5 V11 M12 8.5 V11" fill="none" stroke="#4a7ab0"/><rect x="0.5" y="10.5" width="5" height="5" fill="#f8e8a0" stroke="#c0a030"/><rect x="9.5" y="10.5" width="5" height="5" fill="#f8e8a0" stroke="#c0a030"/></svg>
<div class="t" style="left:1799px;top:100px;font-size:19px;color:#000;font-weight:400;font-family:'Liberation Sans';">Peri...</div>
<div style="left:1877px;top:89px;width:10px;height:4px;border:1px solid #555;box-sizing:border-box;background:#fff"></div>
<div style="left:1900px;top:89px;width:10px;height:10px;border:1px solid #555;box-sizing:border-box;background:#fff"></div>
<div style="left:1901px;top:91px;width:8px;height:1px;background:#555"></div>
<svg style="left:1777px;top:118px;" width="17" height="16" viewBox="0 0 17 16"><path d="M1.5 4.5 H15.5 V12 L12.5 15 H1.5 Z" fill="#f4f4fc" stroke="#c0a868"/><path d="M12.5 15 V12 H15.5" fill="#e8d8a0" stroke="#c0a868"/><path d="M3 12 L10 1 M4 1.5 Q7 1 7 6 Q7 11 10 10.5" fill="none" stroke="#2a58a8" stroke-width="1.3"/><path d="M3 12 H5 M6.5 12 H8.5 M10 12 H12" stroke="#3a5aa0" stroke-width="1.5"/></svg>
<div style="left:1797px;top:114px;width:23px;height:21px;background:#d5e8f8;border:1px solid #a8d0f0;border-radius:3px;box-sizing:border-box"></div>
<svg style="left:1801px;top:118px;" width="17" height="15" viewBox="0 0 17 15"><path d="M1 7.5 H6 V5.5 L9 8 L6 10.5 V8.5 H1 Z" fill="#fbe7a0" stroke="#c89028" stroke-width="0.8"/><path d="M11 2 V13 H13 M11 8 H13" fill="none" stroke="#3a6ab0" stroke-width="1.2"/><path d="M9.5 3.5 L11 1 L12.5 3.5" fill="#3a6ab0" stroke="#3a6ab0"/><rect x="13.5" y="5.5" width="3" height="3" fill="#fff" stroke="#e04848"/><rect x="13.5" y="10.5" width="3" height="3" fill="#fff" stroke="#e04848"/></svg>
<svg style="left:1824px;top:117px;" width="16" height="16" viewBox="0 0 16 16"><rect x="0.5" y="0.5" width="11" height="11" fill="none" stroke="#c8c8c8"/><rect x="3.5" y="3.5" width="12" height="12" fill="#f0f0f0" stroke="#c0c0c0"/><path d="M6 9.5 H13" stroke="#b0b0b0" stroke-width="1.4"/></svg>
<div style="left:1846px;top:116px;width:1px;height:18px;background:#777"></div>
<svg style="left:1853px;top:117px;" width="16" height="16" viewBox="0 0 16 16"><rect x="0.5" y="2.5" width="14" height="12" fill="#fdf8e8" stroke="#b09a60"/><rect x="1" y="3" width="13" height="2.5" fill="#5b8fd8"/><path d="M12 0 L13 2 L15 3 L13 4 L12 6 L11 4 L9 3 L11 2 Z" fill="#f5d060" stroke="#c09030" stroke-width="0.6"/></svg>
<svg style="left:1877px;top:117px;" width="16" height="16" viewBox="0 0 16 16"><rect x="0.5" y="5.5" width="12" height="10" fill="#f4f4f4" stroke="#b0b0b0"/><path d="M8 9 L14 2 L16 4 L10 10 Z" fill="#c8c8c8"/></svg>
<svg style="left:1906px;top:118px;" width="6" height="15" viewBox="0 0 6 15"><circle cx="3" cy="2.5" r="1.7" fill="none" stroke="#555"/><circle cx="3" cy="7.5" r="1.7" fill="none" stroke="#555"/><circle cx="3" cy="12.5" r="1.7" fill="none" stroke="#555"/></svg>
<div style="left:1315px;top:429px;width:605px;height:5px;background:#efefef"></div>
<div style="left:1904px;top:434px;width:16px;height:117px;background:#f0f0f0"></div>
<div style="left:1315px;top:551px;width:605px;height:16px;background:#f0f0f0"></div>
<svg style="left:1906px;top:438px;" width="12" height="8" viewBox="0 0 12 8"><path d="M1 7 L6 1 L11 7 Z" fill="#a0a0a0"/></svg>
<svg style="left:1906px;top:537px;" width="12" height="8" viewBox="0 0 12 8"><path d="M1 1 L6 7 L11 1 Z" fill="#a0a0a0"/></svg>
<svg style="left:1890px;top:553px;" width="8" height="12" viewBox="0 0 8 12"><path d="M1 1 L7 6 L1 11 Z" fill="#a0a0a0"/></svg>
<div style="left:484px;top:572px;width:1437px;height:434px;background:#fff;border:1px solid #d6d6d6;box-sizing:border-box"></div>
<div style="left:485px;top:573px;width:1435px;height:32px;background:#f0f0f0;border-bottom:1px solid #e2e2e2;box-sizing:border-box"></div>
<div style="left:485px;top:573px;width:130px;height:32px;background:#fff"></div>
<svg style="left:490px;top:582px;" width="15" height="14" viewBox="0 0 15 14"><rect x="0.5" y="0.5" width="13" height="10" rx="1" fill="#e8f0fa" stroke="#4a6ab0"/><path d="M3 4 H10 M3 6.5 H8" stroke="#4a6ab0"/><rect x="3" y="11" width="8" height="2" fill="#4a6ab0"/></svg>
<div class="t" style="left:509px;top:591px;font-size:19px;color:#000;font-weight:400;font-family:'Liberation Sans';">Console</div>
<div class="t" style="left:486px;top:618px;font-size:19px;color:#000;font-weight:400;font-family:'Liberation Sans';">No consoles to display at this time.</div>
<div style="left:485px;top:629px;width:1435px;height:1px;background:#a8a8a8"></div>
<svg style="left:1773px;top:579px;" width="15" height="14" viewBox="0 0 15 14"><rect x="0.5" y="4.5" width="12" height="9" fill="#f4f4f4" stroke="#b0b0b0"/><path d="M6 8 L12 2 L14 4 L8 10 Z" fill="#a8a8a8"/><circle cx="13" cy="2" r="1.8" fill="#909090"/></svg>
<svg style="left:1797px;top:578px;" width="14" height="15" viewBox="0 0 14 15"><rect x="0.5" y="0.5" width="13" height="10" rx="1" fill="#f0f0f0" stroke="#888"/><path d="M3 4 H10 M3 6.5 H8" stroke="#888"/><rect x="3" y="11.5" width="8" height="2" fill="#888"/></svg>
<svg style="left:1818px;top:584px;" width="8" height="4" viewBox="0 0 8 4"><path d="M0 0 L8 0 L4 4 Z" fill="#777"/></svg>
<svg style="left:1836px;top:578px;" width="16" height="16" viewBox="0 0 16 16"><rect x="0.5" y="2.5" width="14" height="12" fill="#fdf8e8" stroke="#b09a60"/><rect x="1" y="3" width="13" height="2.5" fill="#5b8fd8"/><path d="M12 0 L13 2 L15 3 L13 4 L12 6 L11 4 L9 3 L11 2 Z" fill="#f5d060" stroke="#c09030" stroke-width="0.6"/></svg>
<svg style="left:1859px;top:584px;" width="8" height="4" viewBox="0 0 8 4"><path d="M0 0 L8 0 L4 4 Z" fill="#222"/></svg>
<div style="left:1877px;top:580px;width:10px;height:4px;border:1px solid #555;box-sizing:border-box;background:#fff"></div>
<div style="left:1900px;top:580px;width:10px;height:10px;border:1px solid #555;box-sizing:border-box;background:#fff"></div>
<div style="left:1901px;top:582px;width:8px;height:1px;background:#555"></div>
<div style="left:1px;top:1032px;width:1920px;height:1px;background:#cfe8cf"></div>
<div style="left:1528px;top:1011px;width:2px;height:15px;background:repeating-linear-gradient(#b8a88a 0 2px, transparent 2px 4px)"></div>
<div style="left:574px;top:170px;width:1092px;height:742px;background:#f0f0f0;border:1px solid #a8a8a8;border-radius:8px;box-sizing:border-box;box-shadow:0 26px 60px -8px rgba(0,0,0,0.32);overflow:hidden"></div>
<div style="left:575px;top:171px;width:1090px;height:130px;background:#fff;border-radius:7px 7px 0 0"></div>
<div style="left:575px;top:301px;width:1090px;height:1px;background:#a0a0a0"></div>
<div style="left:575px;top:302px;width:1090px;height:1px;background:#fff"></div>
<svg style="left:583px;top:177px;" width="16" height="16" viewBox="0 0 16 16"><circle cx="8.0" cy="8.0" r="8.0" fill="#1a3a8c"/><g fill="none" stroke="#fff" stroke-width="1.2"><circle cx="8.0" cy="4.4" r="2.08"/><circle cx="4.8" cy="10.0" r="2.08"/><circle cx="11.2" cy="10.0" r="2.08"/></g><circle cx="8.0" cy="8.0" r="1.2" fill="#fff"/></svg>
<div style="left:1546px;top:185px;width:10px;height:1px;background:#c8c8c8"></div>
<div style="left:1591px;top:180px;width:11px;height:11px;border:1px solid #666;box-sizing:border-box;border-radius:1px"></div>
<svg style="left:1636px;top:179px;" width="13" height="13" viewBox="0 0 13 13"><path d="M1 1 L12 12 M12 1 L1 12" stroke="#555" stroke-width="1.1"/></svg>
<svg style="left:1590px;top:200px;" width="75" height="67" viewBox="0 0 75 67"><defs><linearGradient id="bg1" x1="0" y1="0" x2="1" y2="0"><stop offset="0" stop-color="#fff"/><stop offset="1" stop-color="#d0d9f3"/></linearGradient><linearGradient id="win" x1="0" y1="0" x2="1" y2="1"><stop offset="0" stop-color="#c8ecfc"/><stop offset="0.8" stop-color="#fff"/></linearGradient><linearGradient id="tb" x1="0" y1="0" x2="1" y2="0"><stop offset="0" stop-color="#8a8a8a"/><stop offset="0.7" stop-color="#9a9a9a"/><stop offset="1" stop-color="#fff"/></linearGradient></defs><path d="M75 1 Q45 6 36 24 Q26 46 0 54 L0 67 L75 67 Z" fill="url(#bg1)"/><path d="M75 21 Q55 24 50 36 Q44 52 30 60 L75 67 Z" fill="#c8d2f0" opacity="0.35"/><ellipse cx="38" cy="56" rx="36" ry="5" fill="#c4c6dc" opacity="0.55"/><rect x="5.5" y="17.5" width="42" height="41" fill="url(#win)" stroke="#8a8a8a"/><rect x="6" y="18" width="42" height="6" fill="url(#tb)"/><rect x="6" y="24" width="41" height="5" fill="#fff"/><path d="M1 48 Q24 66 45 47 Q54 37 53 26" fill="none" stroke="#f7e9b0" stroke-width="6" stroke-linecap="round" opacity="0.95"/><path d="M43.5 12.5 Q45 17.5 50 19 Q45 20.5 43.5 25.5 Q42 20.5 37 19 Q42 17.5 43.5 12.5 Z" fill="#fdf6e0" stroke="#b8902a" stroke-width="1.1"/></svg>
<div class="t" style="left:584px;top:230px;font-size:19px;color:#000;font-weight:700;font-family:'Liberation Sans';letter-spacing:0.37px;">C Project</div>
<div class="t" style="left:591px;top:267px;font-size:19px;color:#000;font-weight:400;font-family:'Liberation Sans';letter-spacing:0.19px;">Create C project of selected type</div>
<div class="t" style="left:589px;top:334px;font-size:19px;color:#000;font-weight:400;font-family:'Liberation Sans';letter-spacing:0.17px;">Project name:</div>
<div style="left:713px;top:319px;width:936px;height:29px;background:#fff;border-bottom:1px solid #8a8a8a;box-sizing:border-box"></div>
<svg style="left:590px;top:368px;" width="13" height="13" viewBox="0 0 13 13"><rect x="0" y="0" width="13" height="13" rx="2.5" fill="#1261c4"/><path d="M3.3 6.7 L5.6 9 L9.8 4.3" fill="none" stroke="#fff" stroke-width="1.1"/></svg>
<div class="t" style="left:617px;top:376px;font-size:19px;color:#000;font-weight:400;font-family:'Liberation Sans';letter-spacing:0.34px;">Use default location</div>
<div class="t" style="left:590px;top:410px;font-size:19px;color:#8c8c8c;font-weight:400;font-family:'Liberation Sans';">Location:</div>
<div style="left:673px;top:395px;width:834px;height:28px;background:#f0f0f0;border:1px solid #e2e2e2;border-radius:2px;box-sizing:border-box"></div>
<div class="t" style="left:675px;top:410px;font-size:19px;color:#8c8c8c;font-weight:400;font-family:'Liberation Sans';">E:\GD32DATA</div>
<div style="left:1515px;top:394px;width:133px;height:31px;background:#f9f9f9;border:1px solid #e6e6e6;border-radius:4px;box-sizing:border-box"></div>
<div class="t" style="left:1544px;top:410px;font-size:19px;color:#8c8c8c;font-weight:400;font-family:'Liberation Sans';letter-spacing:-0.37px;">Browse...</div>
<div class="t" style="left:671px;top:448px;font-size:19px;color:#8c8c8c;font-weight:400;font-family:'Liberation Sans';">Choose file system:</div>
<div style="left:840px;top:432px;width:89px;height:30px;background:#f8f8f8;border-radius:2px"></div>
<div class="t" style="left:844px;top:448px;font-size:19px;color:#8c8c8c;font-weight:400;font-family:'Liberation Sans';letter-spacing:0.8px;">default</div>
<svg style="left:916px;top:444px;" width="10" height="6" viewBox="0 0 10 6"><path d="M1 1 L5 5 L9 1" fill="none" stroke="#a0a0a0" stroke-width="1"/></svg>
<div class="t" style="left:589px;top:491px;font-size:19px;color:#000;font-weight:400;font-family:'Liberation Sans';letter-spacing:0.5px;">Project type:</div>
<div style="left:590px;top:507px;width:527px;height:219px;background:#fff;border:1px solid #828790;box-sizing:border-box"></div>
<div class="t" style="left:1122px;top:491px;font-size:19px;color:#000;font-weight:400;font-family:'Liberation Sans';letter-spacing:0.2px;">Toolchains:</div>
<div style="left:1122px;top:507px;width:527px;height:219px;background:#fff;border:1px solid #828790;box-sizing:border-box"></div>
<svg style="left:597px;top:518px;" width="10" height="7" viewBox="0 0 10 7"><path d="M1 1 L5 5.5 L9 1" fill="none" stroke="#333" stroke-width="1.4"/></svg>
<svg style="left:618px;top:516px;" width="17" height="12" viewBox="0 0 17 12"><path d="M0.5 1.5 H5.5 L6.5 3 H14.5 V11.5 H0.5 Z" fill="#f4d68a" stroke="#b08838"/><path d="M0.5 11.5 L3 5.5 H16.5 L14 11.5 Z" fill="#fbe4a4" stroke="#b08838"/></svg>
<div class="t" style="left:638px;top:522px;font-size:19px;color:#000;font-weight:400;font-family:'Liberation Sans';letter-spacing:0.1px;">Executable</div>
<div style="left:640px;top:535px;width:148px;height:26px;background:#d9d9d9;border-radius:3px"></div>
<svg style="left:645px;top:543px;" width="10" height="10" viewBox="0 0 10 10"><defs><linearGradient id="bl" x1="0" y1="0" x2="0" y2="1"><stop offset="0" stop-color="#8ab8e8"/><stop offset="0.5" stop-color="#3a78c0"/><stop offset="1" stop-color="#2a5a98"/></linearGradient></defs><circle cx="5" cy="5" r="4.7" fill="url(#bl)"/><path d="M0.6 5 H9.4" stroke="#d8e8f8" stroke-width="0.8"/></svg>
<div class="t" style="left:662px;top:549px;font-size:19px;color:#000;font-weight:400;font-family:'Liberation Sans';letter-spacing:0.33px;">Empty Project</div>
<svg style="left:645px;top:570px;" width="10" height="10" viewBox="0 0 10 10"><defs><linearGradient id="bl" x1="0" y1="0" x2="0" y2="1"><stop offset="0" stop-color="#8ab8e8"/><stop offset="0.5" stop-color="#3a78c0"/><stop offset="1" stop-color="#2a5a98"/></linearGradient></defs><circle cx="5" cy="5" r="4.7" fill="url(#bl)"/><path d="M0.6 5 H9.4" stroke="#d8e8f8" stroke-width="0.8"/></svg>
<div class="t" style="left:662px;top:576px;font-size:19px;color:#000;font-weight:400;font-family:'Liberation Sans';">Hello World RISC-V C Project</div>
<svg style="left:645px;top:597px;" width="10" height="10" viewBox="0 0 10 10"><defs><linearGradient id="bl" x1="0" y1="0" x2="0" y2="1"><stop offset="0" stop-color="#8ab8e8"/><stop offset="0.5" stop-color="#3a78c0"/><stop offset="1" stop-color="#2a5a98"/></linearGradient></defs><circle cx="5" cy="5" r="4.7" fill="url(#bl)"/><path d="M0.6 5 H9.4" stroke="#d8e8f8" stroke-width="0.8"/></svg>
<div class="t" style="left:662px;top:603px;font-size:19px;color:#000;font-weight:400;font-family:'Liberation Sans';letter-spacing:0.2px;">Hello World ANSI C Project</div>
<svg style="left:598px;top:625px;" width="7" height="11" viewBox="0 0 7 11"><path d="M1.3 1 L5.5 5.5 L1.3 10" fill="none" stroke="#888" stroke-width="1.3"/></svg>
<svg style="left:618px;top:624px;" width="17" height="12" viewBox="0 0 17 12"><path d="M0.5 1.5 H5.5 L6.5 3 H14.5 V11.5 H0.5 Z" fill="#f4d68a" stroke="#b08838"/><path d="M0.5 11.5 L3 5.5 H16.5 L14 11.5 Z" fill="#fbe4a4" stroke="#b08838"/></svg>
<div class="t" style="left:639px;top:630px;font-size:19px;color:#000;font-weight:400;font-family:'Liberation Sans';letter-spacing:0.15px;">Shared Library</div>
<svg style="left:598px;top:652px;" width="7" height="11" viewBox="0 0 7 11"><path d="M1.3 1 L5.5 5.5 L1.3 10" fill="none" stroke="#888" stroke-width="1.3"/></svg>
<svg style="left:618px;top:651px;" width="17" height="12" viewBox="0 0 17 12"><path d="M0.5 1.5 H5.5 L6.5 3 H14.5 V11.5 H0.5 Z" fill="#f4d68a" stroke="#b08838"/><path d="M0.5 11.5 L3 5.5 H16.5 L14 11.5 Z" fill="#fbe4a4" stroke="#b08838"/></svg>
<div class="t" style="left:639px;top:657px;font-size:19px;color:#000;font-weight:400;font-family:'Liberation Sans';letter-spacing:0.19px;">Static Library</div>
<svg style="left:598px;top:679px;" width="7" height="11" viewBox="0 0 7 11"><path d="M1.3 1 L5.5 5.5 L1.3 10" fill="none" stroke="#888" stroke-width="1.3"/></svg>
<svg style="left:618px;top:678px;" width="17" height="12" viewBox="0 0 17 12"><path d="M0.5 1.5 H5.5 L6.5 3 H14.5 V11.5 H0.5 Z" fill="#f4d68a" stroke="#b08838"/><path d="M0.5 11.5 L3 5.5 H16.5 L14 11.5 Z" fill="#fbe4a4" stroke="#b08838"/></svg>
<div class="t" style="left:638px;top:684px;font-size:19px;color:#000;font-weight:400;font-family:'Liberation Sans';letter-spacing:0.53px;">Makefile project</div>
<div style="left:1128px;top:509px;width:172px;height:27px;background:#d9d9d9;border-radius:3px"></div>
<div class="t" style="left:1145px;top:524px;font-size:19px;color:#000;font-weight:400;font-family:'Liberation Sans';letter-spacing:-0.81px;">Cross GCC</div>
<div class="t" style="left:1144px;top:552px;font-size:19px;color:#000;font-weight:400;font-family:'Liberation Sans';letter-spacing:-0.73px;">RISC-V Cross GCC</div>
<svg style="left:590px;top:736px;" width="13" height="13" viewBox="0 0 13 13"><rect x="0" y="0" width="13" height="13" rx="2.5" fill="#1261c4"/><path d="M3.3 6.7 L5.6 9 L9.8 4.3" fill="none" stroke="#fff" stroke-width="1.1"/></svg>
<div class="t" style="left:607px;top:744px;font-size:19px;color:#000;font-weight:400;font-family:'Liberation Sans';letter-spacing:0.36px;">Show project types and toolchains only if they are supported on the platform</div>
<div style="left:575px;top:833px;width:1090px;height:1px;background:#a0a0a0"></div>
<div style="left:575px;top:834px;width:1090px;height:1px;background:#fff"></div>
<svg style="left:595px;top:862px;" width="21" height="21" viewBox="0 0 21 21"><circle cx="10.5" cy="10.5" r="9.5" fill="#fff" stroke="#4a5a8a" stroke-width="1.3"/><path d="M7.5 8 Q7.5 5 10.5 5 Q13.5 5 13.5 8 Q13.5 10 11 11 V13" fill="none" stroke="#4a5a8a" stroke-width="1.6"/><circle cx="11" cy="15.8" r="1.1" fill="#4a5a8a"/></svg>
<div style="left:1084px;top:857px;width:134px;height:32px;background:#fdfdfd;border:1px solid #d0d0d0;border-bottom-color:#bcbcbc;border-radius:4px;box-sizing:border-box"></div>
<div class="t" style="left:1124px;top:874px;font-size:19px;color:#000;font-weight:400;font-family:'Liberation Sans';">&lt; Back</div>
<div style="left:1222px;top:857px;width:134px;height:32px;background:#f9f9f9;border:1px solid #e8e8e8;border-radius:4px;box-sizing:border-box"></div>
<div class="t" style="left:1258px;top:874px;font-size:19px;color:#8c8c8c;font-weight:400;font-family:'Liberation Sans';letter-spacing:0.85px;">Next &gt;</div>
<div style="left:1368px;top:857px;width:133px;height:32px;background:#f9f9f9;border:1px solid #e8e8e8;border-radius:4px;box-sizing:border-box"></div>
<div class="t" style="left:1408px;top:874px;font-size:19px;color:#8c8c8c;font-weight:400;font-family:'Liberation Sans';letter-spacing:0.6px;">Finish</div>
<div style="left:1514px;top:857px;width:134px;height:32px;background:#fdfdfd;border:1px solid #d0d0d0;border-bottom-color:#bcbcbc;border-radius:4px;box-sizing:border-box"></div>
<div class="t" style="left:1552px;top:874px;font-size:19px;color:#000;font-weight:400;font-family:'Liberation Sans';">Cancel</div>
</body></html>
